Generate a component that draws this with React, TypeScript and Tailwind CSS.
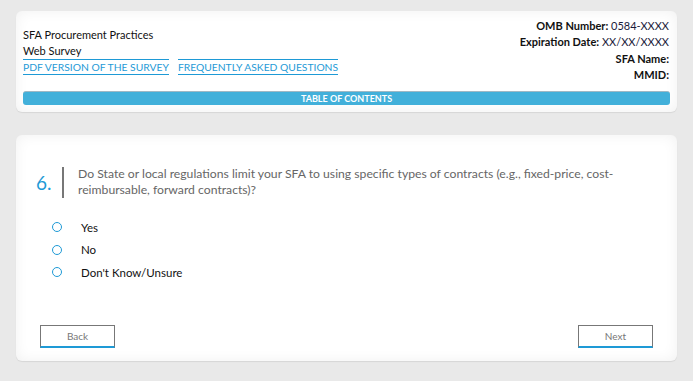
import React from "react";

const font = { fontFamily: 'Lato, "Open Sans", sans-serif' };

function Radio({ label }: { label: string }) {
  return (
    <label className="flex items-center h-[22.5px]">
      <span className="ml-[12px] w-[10px] h-[10px] rounded-full border-[1.5px] border-[#1e9ad6] box-border" />
      <span className="ml-[19px] text-[11.5px] text-[#111]">{label}</span>
    </label>
  );
}

export default function App() {
  return (
    <div className="min-h-[381px] bg-[#e9e9e9] px-[16px] pt-[11px] pb-[19px] flex flex-col gap-[23px]" style={font}>
      <div className="h-[101px] bg-white rounded-[6px] shadow-[inset_0_0_14px_rgba(0,0,0,0.06),0_1px_1px_rgba(0,0,0,0.08)] px-[7px] pt-[7px] flex flex-col">
        <div className="flex justify-between">
          <div className="mt-[9px] text-[11px] leading-[16px] text-[#111]">
            <div>SFA Procurement Practices</div>
            <div>Web Survey</div>
            <div className="flex gap-[9px] text-[#1e9ad6] text-[10.3px]">
              <span className="border-y border-[#1e9ad6] leading-[14px]">PDF VERSION OF THE SURVEY</span>
              <span className="border-y border-[#1e9ad6] leading-[14px]">FREQUENTLY ASKED QUESTIONS</span>
            </div>
          </div>
          <div className="text-right text-[11px] leading-[16.3px] pr-[1px] text-[#1b1b3a]">
            <div><b className="text-[#111]">OMB Number:</b> 0584-XXXX</div>
            <div><b className="text-[#111]">Expiration Date:</b> XX/XX/XXXX</div>
            <div><b className="text-[#111]">SFA Name:</b></div>
            <div><b className="text-[#111]">MMID:</b></div>
          </div>
        </div>
        <div className="mt-[8px] h-[14px] rounded-[3px] bg-[#42b0da] border-t border-[#9fb8c4] flex items-center justify-center text-white font-bold text-[9px] leading-none">
          TABLE OF CONTENTS
        </div>
      </div>

      <div className="h-[226px] bg-white rounded-[6px] shadow-[inset_0_0_14px_rgba(0,0,0,0.06),0_1px_1px_rgba(0,0,0,0.08)] px-[24px] pt-[31px] flex flex-col">
        <div className="flex items-center">
          <div className="w-[22px] text-[19px] text-[#1e9ad6] leading-none -ml-[4px] mr-[4px]">6.</div>
          <div className="w-[2px] h-[31px] bg-[#777] mr-[14px]" />
          <div className="text-[12.2px] leading-[16px] text-[#666] w-[548px]">
            Do State or local regulations limit your SFA to using specific types of contracts (e.g., fixed-price, cost-reimbursable, forward contracts)?
          </div>
        </div>
        <div className="mt-[18px] flex flex-col">
          <Radio label="Yes" />
          <Radio label="No" />
          <Radio label="Don't Know/Unsure" />
        </div>
        <div className="mt-auto mb-[13px] flex justify-between">
          <button className="w-[75px] h-[23px] border border-[#777] border-b-2 border-b-[#1e9ad6] text-[10px] text-[#777]">Back</button>
          <button className="w-[75px] h-[23px] border border-[#777] border-b-2 border-b-[#1e9ad6] text-[10px] text-[#777]">Next</button>
        </div>
      </div>
    </div>
  );
}
